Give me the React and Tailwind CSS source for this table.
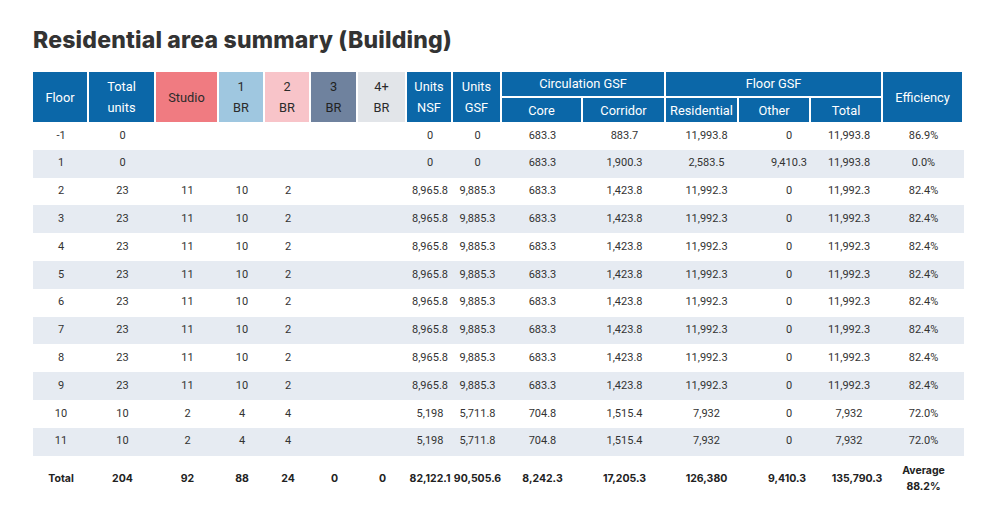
import React from 'react';

const cols = 'grid-cols-[56px_67px_63px_46px_46px_47px_49px_46px_49px_81px_83px_73px_72px_72px_81px]';

const rows = [
  ['-1', '0', '', '', '', '', '', '0', '0', '683.3', '883.7', '11,993.8', '0', '11,993.8', '86.9%'],
  ['1', '0', '', '', '', '', '', '0', '0', '683.3', '1,900.3', '2,583.5', '9,410.3', '11,993.8', '0.0%'],
  ...['2', '3', '4', '5', '6', '7', '8', '9'].map((f) => [
    f, '23', '11', '10', '2', '', '', '8,965.8', '9,885.3', '683.3', '1,423.8', '11,992.3', '0', '11,992.3', '82.4%',
  ]),
  ...['10', '11'].map((f) => [
    f, '10', '2', '4', '4', '', '', '5,198', '5,711.8', '704.8', '1,515.4', '7,932', '0', '7,932', '72.0%',
  ]),
];

const totals = ['Total', '204', '92', '88', '24', '0', '0', '82,122.1', '90,505.6', '8,242.3', '17,205.3', '126,380', '9,410.3', '135,790.3'];

// small nudges so body numbers sit where the reference has them
const bodyShift = ['', '', '', '', '', '', '', '', '', '', '', 'pl-2', 'pl-[28px]', 'pl-1', ''];
const totalShift = ['', '', '', '', '', '', '', '', '', '', '', 'pl-2', 'pl-6', 'pl-5', ''];

const Head = ({ className = '', children }) => (
  <div className={`flex items-center justify-center text-center leading-[21px] border-r-2 border-white ${className}`}>
    {children}
  </div>
);

const blue = 'bg-[#0b67a8] text-white';

const App = () => {
  return (
    <div className="w-[1000px] h-[532px] bg-white font-['Roboto',sans-serif] text-[#333]">
      <h1 className="pl-[33px] pt-[29px] h-[52px] leading-none text-[23px] font-extrabold text-[#333] font-['Inter',sans-serif] tracking-[0.2px]">
        Residential area summary (Building)
      </h1>

      <div className="ml-[33px] mt-[20px] w-[931px]">
        <div className={`grid ${cols} grid-rows-[26px_24px] text-[12.8px]`}>
          <Head className={`row-span-2 ${blue}`}>Floor</Head>
          <Head className={`row-span-2 ${blue}`}>Total<br />units</Head>
          <Head className="row-span-2 bg-[#f07b81] text-[#2b2b2b]">Studio</Head>
          <Head className="row-span-2 bg-[#9fc7e0] text-[#2b2b2b]">1<br />BR</Head>
          <Head className="row-span-2 bg-[#f8c4c9] text-[#2b2b2b]">2<br />BR</Head>
          <Head className="row-span-2 bg-[#6f829e] text-[#222]">3<br />BR</Head>
          <Head className="row-span-2 bg-[#e2e5e9] text-[#2b2b2b]">4+<br />BR</Head>
          <Head className={`row-span-2 ${blue}`}>Units<br />NSF</Head>
          <Head className={`row-span-2 ${blue}`}>Units<br />GSF</Head>
          <Head className={`col-span-2 border-b-2 pb-[2px] ${blue}`}>Circulation GSF</Head>
          <Head className={`col-span-3 border-b-2 pb-[2px] ${blue}`}>Floor GSF</Head>
          <Head className={`row-span-2 border-r-0 ${blue}`}>Efficiency</Head>
          <Head className={blue}>Core</Head>
          <Head className={blue}>Corridor</Head>
          <Head className={blue}>Residential</Head>
          <Head className={blue}>Other</Head>
          <Head className={blue}>Total</Head>
        </div>

        <div className="text-[11px] text-[#333]">
          {rows.map((r, i) => (
            <div key={i} className={`grid ${cols} h-[27.8px] items-center ${i % 2 === 1 ? 'bg-[#e6ebf2]' : 'bg-white'}`}>
              {r.map((v, j) => (
                <div key={j} className={`text-center ${bodyShift[j]}`}>{v}</div>
              ))}
            </div>
          ))}
        </div>

        <div className={`grid ${cols} h-[46px] items-center text-[10.5px] font-bold text-[#222] font-['Inter',sans-serif]`}>
          {totals.map((v, j) => (
            <div key={j} className={`text-center ${totalShift[j]}`}>{v}</div>
          ))}
          <div className="text-center leading-[16px]">Average<br />88.2%</div>
        </div>
      </div>
    </div>
  );
};

export default App;
